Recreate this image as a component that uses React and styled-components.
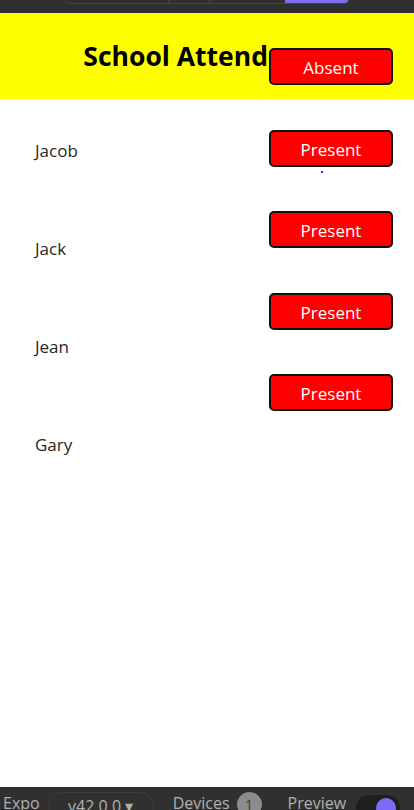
import styled, { createGlobalStyle } from "styled-components";

const GlobalStyle = createGlobalStyle`
  html, body {
    margin: 0;
    padding: 0;
    background: #ffffff;
  }
  body {
    font-family: "Open Sans", "Noto Sans", sans-serif;
  }
`;

const students = ["Jacob", "Jack", "Jean", "Gary"];
const statuses = ["Absent", "Present", "Present", "Present", "Present"];

function App() {
  return (
    <>
      <GlobalStyle />
      <Screen>
        <TopBar>
          <Segments>
            <Segment $w={102} />
            <Segment $w={40} />
            <Segment $w={75} />
            <Segment $w={62} $active />
          </Segments>
        </TopBar>

        <Header>
          <Title>School Attendance</Title>
        </Header>

        <Content>
          <NameList>
            {students.map((name) => (
              <Name key={name}>{name}</Name>
            ))}
          </NameList>
        </Content>

        <ButtonColumn>
          {statuses.map((s, i) => (
            <StatusButton key={i}>{s}</StatusButton>
          ))}
          <Dot />
        </ButtonColumn>

        <BottomBar>
          <BarLabel>Expo</BarLabel>
          <VersionPill>v42.0.0 ▾</VersionPill>
          <BarLabel $ml={19}>Devices</BarLabel>
          <Badge>1</Badge>
          <BarLabel $ml={26}>Preview</BarLabel>
          <Toggle>
            <Knob />
          </Toggle>
        </BottomBar>
      </Screen>
    </>
  );
}

const Screen = styled.div`
  position: relative;
  width: 414px;
  height: 810px;
  display: flex;
  flex-direction: column;
  overflow: hidden;
`;

const TopBar = styled.div`
  height: 13px;
  background: #303030;
  display: flex;
  padding-left: 65px;
  box-sizing: border-box;
  flex-shrink: 0;
`;

const Segments = styled.div`
  display: flex;
  height: 3px;
  margin-top: -1px;
  border: 1px solid #454545;
  border-radius: 0 0 5px 5px;
  overflow: hidden;
`;

const Segment = styled.div`
  width: ${(p) => p.$w}px;
  background: ${(p) => (p.$active ? "#7b6cf3" : "transparent")};
  border-left: 1px solid ${(p) => (p.$active ? "#7b6cf3" : "#454545")};
  &:first-child {
    border-left: none;
  }
`;

const Header = styled.div`
  height: 86px;
  background: #ffff00;
  display: flex;
  align-items: center;
  justify-content: center;
  flex-shrink: 0;
`;

const Title = styled.h1`
  margin: 0;
  font-size: 26.5px;
  font-weight: 700;
  color: #000;
`;

const Content = styled.div`
  flex: 1;
  padding: 41px 0 0 35px;
`;

const NameList = styled.div`
  display: flex;
  flex-direction: column;
  gap: 76px;
`;

const Name = styled.div`
  font-size: 17px;
  line-height: 22px;
  color: #262626;
`;

const ButtonColumn = styled.div`
  position: absolute;
  top: 48px;
  right: 21px;
  display: flex;
  flex-direction: column;
  gap: 44.5px;
`;

const StatusButton = styled.button`
  width: 124px;
  height: 37px;
  background: #ff0000;
  border: 2px solid #111;
  border-radius: 5px;
  color: #fff;
  font-family: "Open Sans", "Noto Sans", sans-serif;
  font-size: 17px;
  padding: 2px 0 0;
  cursor: pointer;
`;

const Dot = styled.span`
  position: absolute;
  top: 123px;
  left: 52px;
  width: 2px;
  height: 2px;
  background: #2a2aff;
`;

const BottomBar = styled.div`
  height: 23px;
  background: #303030;
  display: flex;
  align-items: flex-start;
  padding: 5px 0 0 3px;
  box-sizing: border-box;
  overflow: hidden;
  flex-shrink: 0;
`;

const BarLabel = styled.span`
  margin-left: ${(p) => p.$ml || 0}px;
  color: #b0b0b0;
  font-size: 16px;
  line-height: 22px;
  white-space: nowrap;
`;

const VersionPill = styled.span`
  margin-left: 8px;
  width: 106px;
  height: 28px;
  box-sizing: border-box;
  border: 1px solid #3d3d3d;
  border-radius: 14px;
  color: #b0b0b0;
  font-size: 16px;
  line-height: 26px;
  text-align: center;
  white-space: nowrap;
`;

const Badge = styled.span`
  margin-left: 7px;
  width: 25px;
  height: 25px;
  border-radius: 50%;
  background: #8c8c8c;
  color: #3a3a3a;
  font-size: 15px;
  line-height: 25px;
  text-align: center;
  flex-shrink: 0;
`;

const Toggle = styled.span`
  margin-left: 10px;
  margin-top: 3px;
  width: 44px;
  height: 26px;
  border-radius: 13px;
  background: #1e1e1e;
  position: relative;
  flex-shrink: 0;
`;

const Knob = styled.span`
  position: absolute;
  top: 3px;
  right: 4px;
  width: 20px;
  height: 20px;
  border-radius: 50%;
  background: #7b6cf3;
`;

export default App;
